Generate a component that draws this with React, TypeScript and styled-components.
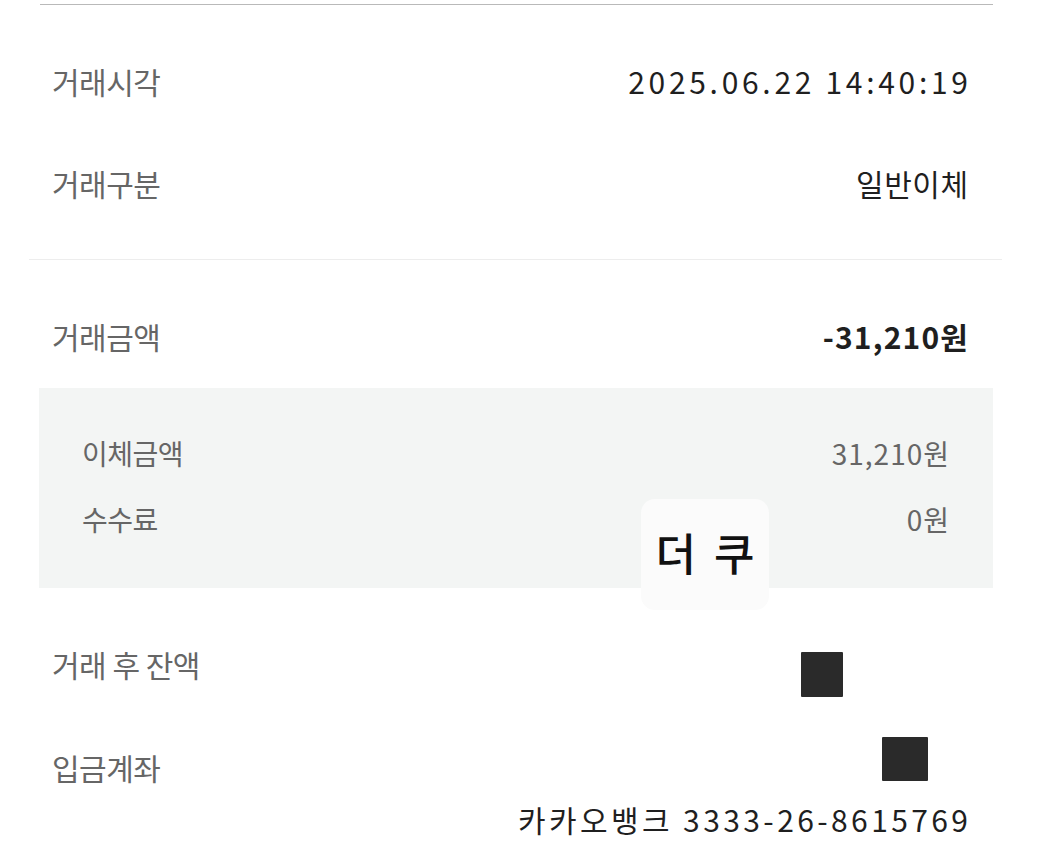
import * as React from 'react'
import styled, { createGlobalStyle } from 'styled-components';

const GlobalStyle = createGlobalStyle`
    html, body {
        margin: 0;
        padding: 0;
        background: #ffffff;
    }
    body {
        font-family: "Noto Sans CJK KR", "Noto Sans", sans-serif;
        color: #222222;
    }
`;

const Page = styled.div`
    position: relative;
    width: 1050px;
    height: 864px;
    overflow: hidden;
    padding-top: 4px;
    box-sizing: border-box;
`;

const TopRule = styled.div`
    height: 1px;
    margin: 0 57px 0 40px;
    background-color: #b9b9b9;
`;

const Divider = styled.div`
    height: 1px;
    margin: 22px 48px 0 29px;
    background-color: #ededed;
`;

const Section = styled.div<{ $top?: number }>`
    display: flex;
    flex-direction: column;
    padding: ${p => p.$top || 0}px 82px 0 52px;
`;

const Row = styled.div<{ $height: number }>`
    display: flex;
    align-items: center;
    justify-content: space-between;
    height: ${p => p.$height}px;
    padding-bottom: 6px;
    box-sizing: border-box;
`;

const Label = styled.span`
    font-size: 30px;
    letter-spacing: -0.5px;
    color: #666666;
`;

const Value = styled.span<{ $bold?: boolean; $spacing?: number }>`
    font-size: 30px;
    letter-spacing: ${p => p.$spacing || 0}px;
    margin-right: ${p => -(p.$spacing || 0)}px;
    font-weight: ${p => p.$bold ? 700 : 400};
    color: #1f1f1f;
`;

const FeeBox = styled.div`
    display: flex;
    flex-direction: column;
    margin: 0 57px 0 39px;
    padding: 35px 44px 33px 43px;
    background-color: #f3f5f4;
`;

const SubLabel = styled.span`
    font-size: 28px;
    letter-spacing: -0.5px;
    color: #666666;
`;

const SubValue = styled.span`
    font-size: 28px;
    letter-spacing: 1px;
    margin-right: -1px;
    color: #666666;
`;

const AccountRow = styled.div`
    display: flex;
    justify-content: space-between;
    align-items: flex-start;
    padding-top: 19px;
`;

const AccountLabel = styled(Label)`
    margin-top: 8px;
`;

const AccountValue = styled.div`
    display: flex;
    flex-direction: column;
    align-items: flex-end;
    gap: 16px;
`;

const Redact = styled.div<{ $w: number; $h: number; $right: number; $down?: number }>`
    width: ${p => p.$w}px;
    height: ${p => p.$h}px;
    margin-right: ${p => p.$right}px;
    margin-top: ${p => p.$down || 0}px;
    background-color: #2a2a2a;
    border-radius: 1px;
`;

const Sticker = styled.div`
    position: absolute;
    left: 641px;
    top: 499px;
    width: 128px;
    height: 111px;
    padding-bottom: 6px;
    box-sizing: border-box;
    border-radius: 14px;
    background-color: #fbfbfb;
    display: flex;
    align-items: center;
    justify-content: center;
    font-size: 44px;
    font-weight: 500;
    color: #111111;
    letter-spacing: 4px;
    text-indent: 4px;
`;

const rows: [string, string, number][] = [
    ['거래시각', '2025.06.22 14:40:19', 3.7],
    ['거래구분', '일반이체', 0.5],
];

const fees: [string, string][] = [
    ['이체금액', '31,210원'],
    ['수수료', '0원'],
];

export default function App() {
    return (
        <Page>
            <GlobalStyle />
            <TopRule />
            <Section $top={28}>
                {rows.map(([label, value, spacing]) => (
                    <Row key={label} $height={102}>
                        <Label>{label}</Label>
                        <Value $spacing={spacing}>{value}</Value>
                    </Row>
                ))}
            </Section>
            <Divider />
            <Section $top={29}>
                <Row $height={99}>
                    <Label>거래금액</Label>
                    <Value $bold $spacing={1.2}>-31,210원</Value>
                </Row>
            </Section>
            <FeeBox>
                {fees.map(([label, value]) => (
                    <Row key={label} $height={66}>
                        <SubLabel>{label}</SubLabel>
                        <SubValue>{value}</SubValue>
                    </Row>
                ))}
            </FeeBox>
            <Section $top={27}>
                <Row $height={103}>
                    <Label>거래 후 잔액</Label>
                    <Redact $w={42} $h={45} $right={125} $down={22} />
                </Row>
                <AccountRow>
                    <AccountLabel>입금계좌</AccountLabel>
                    <AccountValue>
                        <Redact $w={46} $h={44} $right={40} />
                        <Value $spacing={3.4}>카카오뱅크 3333-26-8615769</Value>
                    </AccountValue>
                </AccountRow>
            </Section>
            <Sticker>더 쿠</Sticker>
        </Page>
    );
}
